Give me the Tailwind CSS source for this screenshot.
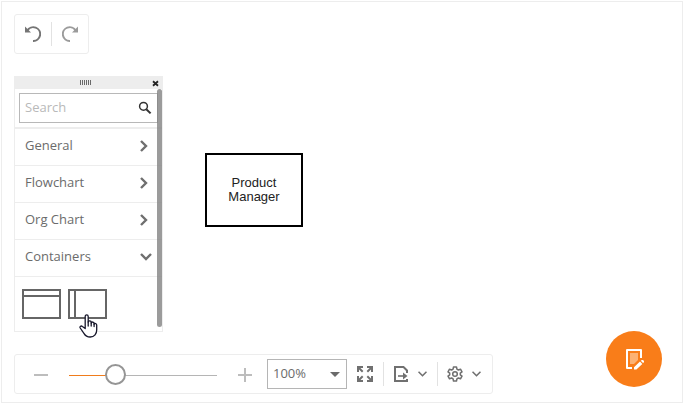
<!DOCTYPE html>
<html lang="en">
<head>
<meta charset="utf-8">
<meta name="viewport" content="width=device-width, initial-scale=1">
<title>Diagram editor</title>
<script src="https://cdn.jsdelivr.net/npm/@tailwindcss/browser@4"></script>
</head>
<body class="flex min-h-screen bg-white p-px font-['Open_Sans','Noto_Sans',sans-serif] text-[13px] text-[#6b6b6b]">
<main class="relative flex flex-1 flex-col items-start gap-[22px] border border-[#ededed] px-3 pt-3 pb-2">

  <!-- History toolbar -->
  <div role="toolbar" aria-label="History" class="flex h-10 items-center rounded-[3px] border border-[#ededed] px-[10px]">
    <button type="button" aria-label="Undo" class="flex">
      <svg class="size-4" viewBox="0 0 16 16" fill="none"><path d="M0 .5l6 6H0z" fill="#757575"/><path d="M2.300 4.600A6.900 6.900 0 1 1 8 15" stroke="#757575" stroke-width="2"/></svg>
    </button>
    <span class="mx-[10px] h-6 w-px bg-[#e2e2e2]"></span>
    <button type="button" aria-label="Redo" class="flex">
      <svg class="size-4" viewBox="0 0 16 16" fill="none"><path d="M16 .5l-6 6h6z" fill="#9b9b9b"/><path d="M13.700 4.600A6.900 6.900 0 1 0 8 15" stroke="#9b9b9b" stroke-width="2"/></svg>
    </button>
  </div>

  <!-- Toolbox and canvas -->
  <div class="flex flex-1 items-start gap-[42px]">
    <aside aria-label="Toolbox" class="relative w-[149px] bg-white">
      <header class="flex h-[13px] items-center bg-[#ededed] pr-1 pl-[66px]">
        <svg class="h-[5px] w-3" viewBox="0 0 12 5" shape-rendering="crispEdges"><path d="M0 0h1v5H0zM2 0h1v5H2zM4 0h1v5H4zM6 0h1v5H6zM8 0h1v5H8zM10 0h1v5h-1z" fill="#6a6a6a"/></svg>
        <button type="button" aria-label="Close" class="mt-0.5 ml-auto flex">
          <svg class="size-[7px]" viewBox="0 0 7 7"><path d="M1 1.3l5 4.4M6 1.3L1 5.7" stroke="#222" stroke-width="1.8"/></svg>
        </button>
      </header>
      <div class="border-x border-b border-[#ededed]">
        <div class="border-b-2 border-[#ededed] p-1 pr-0">
          <label class="flex h-[30px] w-[139px] items-center border border-[#b8b8b8] pr-[5px] pl-[5px]">
            <input type="text" aria-label="Search" placeholder="Search" class="min-w-0 flex-1 outline-none placeholder:text-[#b9b9b9]">
            <svg class="size-[14px]" viewBox="0 0 14 14" fill="none" stroke="#333"><circle cx="5.5" cy="5.3" r="3.9" stroke-width="1.5"/><path d="M8.3 8.2l4.3 4.2" stroke-width="2"/></svg>
          </label>
        </div>
        <button type="button" class="flex h-[37px] w-full items-center justify-between border-b border-[#ededed] pr-[14px] pb-0.5 pl-[10px]"><span>General</span>
          <svg class="h-3 w-2" viewBox="0 0 8 12" fill="none" stroke="#6f6f6f" stroke-width="2.4"><path d="M1 1l5 5-5 5"/></svg></button>
        <button type="button" class="flex h-[37px] w-full items-center justify-between border-b border-[#ededed] pr-[14px] pb-0.5 pl-[10px]"><span>Flowchart</span>
          <svg class="h-3 w-2" viewBox="0 0 8 12" fill="none" stroke="#6f6f6f" stroke-width="2.4"><path d="M1 1l5 5-5 5"/></svg></button>
        <button type="button" class="flex h-[37px] w-full items-center justify-between border-b border-[#ededed] pr-[14px] pb-0.5 pl-[10px]"><span>Org Chart</span>
          <svg class="h-3 w-2" viewBox="0 0 8 12" fill="none" stroke="#6f6f6f" stroke-width="2.4"><path d="M1 1l5 5-5 5"/></svg></button>
        <button type="button" aria-expanded="true" class="flex h-[37px] w-full items-center justify-between border-b border-[#ededed] pr-[10px] pb-0.5 pl-[10px]"><span>Containers</span>
          <svg class="h-2 w-3" viewBox="0 0 12 8" fill="none" stroke="#6f6f6f" stroke-width="2.4"><path d="M1 1l5 5 5-5"/></svg></button>
        <div class="flex gap-[7px] px-[7px] py-3">
          <button type="button" aria-label="Vertical container"><svg class="h-[30px] w-[39px]" viewBox="0 0 39 30" fill="none" stroke="#666" stroke-width="2"><path d="M1 1h37v28H1zM1 7h37"/></svg></button>
          <button type="button" aria-label="Horizontal container"><svg class="h-[30px] w-[39px]" viewBox="0 0 39 30" fill="none" stroke="#666" stroke-width="2"><path d="M1 1h37v28H1zM7 1v28"/></svg></button>
        </div>
      </div>
      <span class="absolute top-[13px] right-px bottom-[5px] w-[5px] rounded-full bg-[#828282]/80"></span>
      <!-- Hand pointer over the second shape -->
      <svg class="absolute top-[238px] left-[65px] h-6 w-[19px]" viewBox="0 0 19 24" fill="#fff" stroke="#17172b" stroke-width="1.3" stroke-linejoin="round" stroke-linecap="round"><path d="M6.2 14.5V2.4C6.2.4 9.2.4 9.2 2.4V8c.2-1.6 3-1.4 3 .2V9c.3-1.5 2.9-1.2 2.9.4v.8c.4-1.2 2.6-.9 2.6.8v5c0 3.5-2.2 7-6.5 7-3.2 0-4.8-1.200-6.100-3.400L1.200 14c-.8-1.500.9-2.600 2.200-1.500z"/><path d="M9.2 8v4M12.2 9v3M15.1 10v2.5" fill="none"/></svg>
    </aside>
    <div class="mt-[77px] flex h-[74px] w-[98px] items-center justify-center border-2 border-black text-center font-['Liberation_Sans',Arial,sans-serif] text-[13px] leading-[14px] text-[#222]">Product<br>Manager</div>
  </div>

  <!-- View toolbar -->
  <div role="toolbar" aria-label="View" class="flex h-10 items-center rounded-[3px] border border-[#ededed] pr-[11px] pl-[19px]">
    <button type="button" aria-label="Zoom out" class="flex"><svg class="size-[14px]" viewBox="0 0 14 14"><path d="M0 7h14v2H0z" fill="#bdbdbd"/></svg></button>
    <div class="relative ml-[21px] h-[22px] w-[148px]">
      <input type="range" aria-label="Zoom" min="0" max="100" value="30" class="absolute inset-0 w-full cursor-pointer opacity-0">
      <span class="pointer-events-none absolute inset-x-0 top-3 flex h-px"><span class="w-[31%] bg-[#f07c1c]"></span><span class="flex-1 bg-[#b5b5b5]"></span></span>
      <span class="pointer-events-none absolute top-px left-9 size-[21px] rounded-full border-2 border-[#959595] bg-white"></span>
    </div>
    <button type="button" aria-label="Zoom in" class="ml-[21px] flex"><svg class="size-[14px] overflow-visible" viewBox="0 0 14 14"><path d="M0 7h14v2H0zM6 1h2v14H6z" fill="#bdbdbd"/></svg></button>
    <div class="relative ml-[15px]">
      <select aria-label="Zoom level" class="block h-[30px] w-20 appearance-none border border-[#b5b5b5] bg-white pl-[5px]"><option>100%</option></select>
      <svg class="pointer-events-none absolute top-[13px] right-[7px] h-[5px] w-[10px]" viewBox="0 0 10 5"><path d="M0 0h10L5 5z" fill="#6b6b6b"/></svg>
    </div>
    <button type="button" aria-label="Full screen" class="ml-[10px] flex"><svg class="size-4" viewBox="0 0 16 16" fill="#707070"><path d="M0 0h6v2H3.4l3 3L5 6.400l-3-3V6H0zM16 0v6h-2V3.400l-3 3L9.600 5l3-3H10V0zM0 16v-6h2v2.600l3-3L6.400 11l-3 3H6v2zM16 16h-6v-2h2.600l-3-3L11 9.600l3 3V10h2z"/></svg></button>
    <span class="ml-[10px] h-6 w-px bg-[#e2e2e2]"></span>
    <button type="button" aria-label="Export" class="ml-[10px] flex items-center gap-[8px]">
      <svg class="size-4" viewBox="0 0 16 16" fill="none" stroke="#707070" stroke-width="2"><path d="M13 7V4.500L9.500 1H1v14h12v-2"/><path d="M4 10h7" stroke-width="1.600"/><path d="M9 6.500l4.500 3.500L9 13.500z" fill="#707070" stroke="none"/></svg>
      <svg class="h-[6px] w-[9px]" viewBox="0 0 9 6" fill="none" stroke="#6f6f6f" stroke-width="1.600"><path d="M.5.7l4 4 4-4"/></svg>
    </button>
    <span class="ml-[10px] h-6 w-px bg-[#e2e2e2]"></span>
    <button type="button" aria-label="Settings" class="ml-[9px] flex items-center gap-[9px]">
      <svg class="size-4" viewBox="0 0 16 16" fill="none" stroke="#707070" stroke-width="1.500" stroke-linejoin="round"><path d="M6.500.9h3l.4 2.200 1.500.9 2.100-.8 1.500 2.600-1.700 1.400v1.600l1.700 1.400-1.500 2.600-2.100-.8-1.500.9-.4 2.200h-3l-.4-2.200-1.500-.9-2.100.8L1 10.200l1.700-1.400V7.200L1 5.800l1.500-2.600 2.100.8 1.500-.9z"/><circle cx="8" cy="8" r="2.300"/></svg>
      <svg class="h-[6px] w-[9px]" viewBox="0 0 9 6" fill="none" stroke="#6f6f6f" stroke-width="1.600"><path d="M.5.7l4 4 4-4"/></svg>
    </button>
  </div>

  <!-- Properties button -->
  <button type="button" aria-label="Properties" class="absolute right-5 bottom-[15px] flex size-14 items-center justify-center rounded-full bg-[#f97d19]">
    <svg class="ml-0.5 size-5 overflow-visible" viewBox="0 0 20 20" fill="none"><path d="M5 4h8v7l-4 4H5z" fill="#fcb274"/><path d="M16 9V1H2v18h5" stroke="#fff" stroke-width="2" stroke-linejoin="round"/><path d="M9 18.300l6-5.700 2.300 2.300-5.900 5.600H9zM15.800 11.800l1-.9h1.200l1 1v1.300l-1 .9z" fill="#fff"/></svg>
  </button>
</main>
</body>
</html>
